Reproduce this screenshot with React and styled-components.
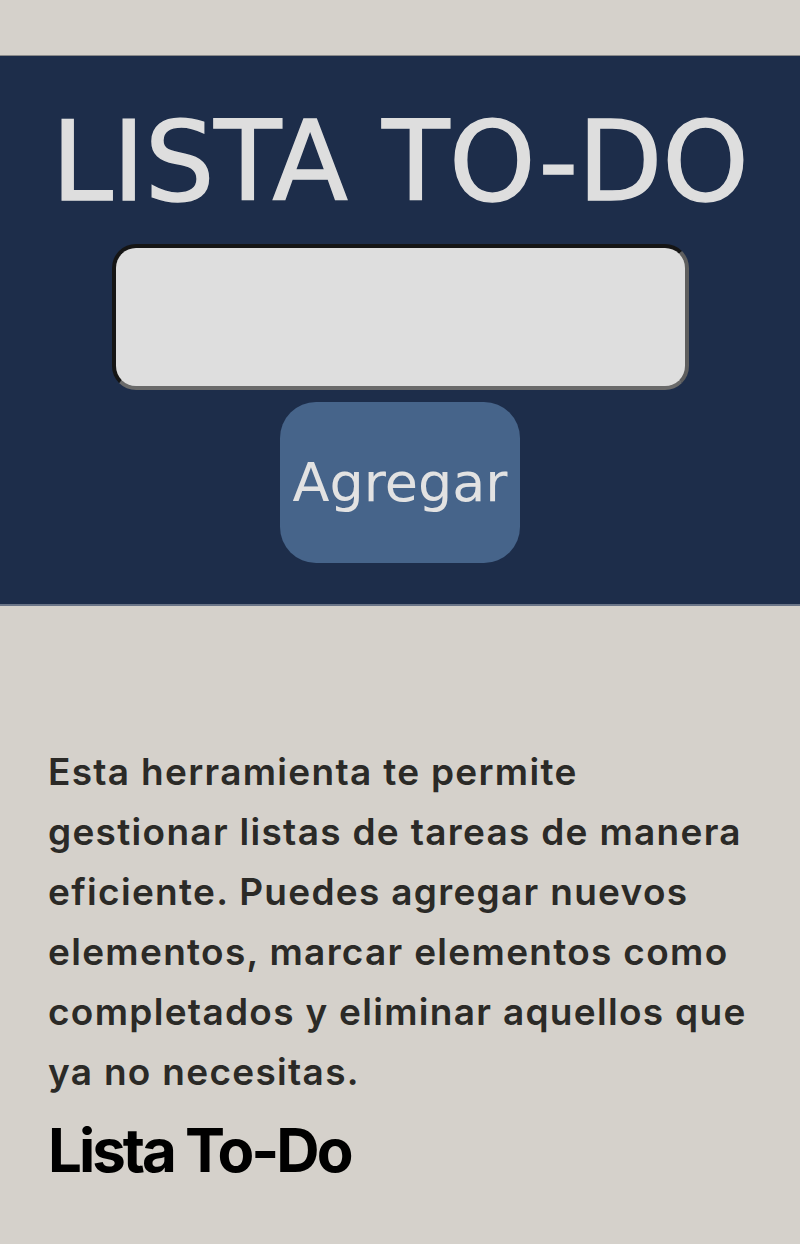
import styled, { createGlobalStyle } from "styled-components";

const GlobalStyle = createGlobalStyle`
  html, body {
    margin: 0;
    padding: 0;
    background: #d5d1cb;
  }
`;

const Page = styled.div`
  padding-top: 55px;
  min-height: 1244px;
  box-sizing: border-box;
`;

const Header = styled.header`
  background: #1d2d4a;
  border-top: 1px solid #8a8a8a;
  border-bottom: 2px solid #6b7588;
  height: 551px;
  box-sizing: border-box;
  display: flex;
  flex-direction: column;
  align-items: center;
`;

const Title = styled.h1`
  margin: 50px 0 0;
  font-family: "DejaVu Sans", Verdana, sans-serif;
  font-weight: normal;
  font-size: 110px;
  line-height: 112px;
  letter-spacing: -0.3px;
  color: #dedede;
  -webkit-text-stroke: 1.5px #dedede;
`;

const TaskInput = styled.input`
  margin-top: 26px;
  width: 577px;
  height: 146px;
  box-sizing: border-box;
  background: #dedede;
  border: 4px solid;
  border-color: #151515 #5e5e5e #6a6a6a #151515;
  border-radius: 24px;
  outline: none;
`;

const AddButton = styled.button`
  margin-top: 12px;
  width: 240px;
  height: 161px;
  background: #46648a;
  border: none;
  border-radius: 36px;
  color: #e2e2e2;
  font-family: "DejaVu Sans", Verdana, sans-serif;
  font-size: 54px;
  padding: 0;
`;

const Content = styled.main`
  padding: 136px 48px 0;
`;

const Description = styled.p`
  margin: 0;
  font-family: Inter, sans-serif;
  font-weight: 600;
  font-size: 37px;
  line-height: 60px;
  letter-spacing: 1.3px;
  color: #2b2a27;
`;

const ListTitle = styled.h2`
  margin: 16px 0 0;
  font-family: Inter, sans-serif;
  font-weight: 700;
  font-size: 60px;
  line-height: 64px;
  letter-spacing: -3px;
  color: #000;
`;

export default function App() {
  return (
    <>
      <GlobalStyle />
      <Page>
        <Header>
          <Title>LISTA TO-DO</Title>
          <TaskInput type="text" />
          <AddButton>Agregar</AddButton>
        </Header>
        <Content>
          <Description>
            Esta herramienta te permite gestionar listas de tareas de manera
            eficiente. Puedes agregar nuevos elementos, marcar elementos como
            completados y eliminar aquellos que ya no necesitas.
          </Description>
          <ListTitle>Lista To-Do</ListTitle>
        </Content>
      </Page>
    </>
  );
}
